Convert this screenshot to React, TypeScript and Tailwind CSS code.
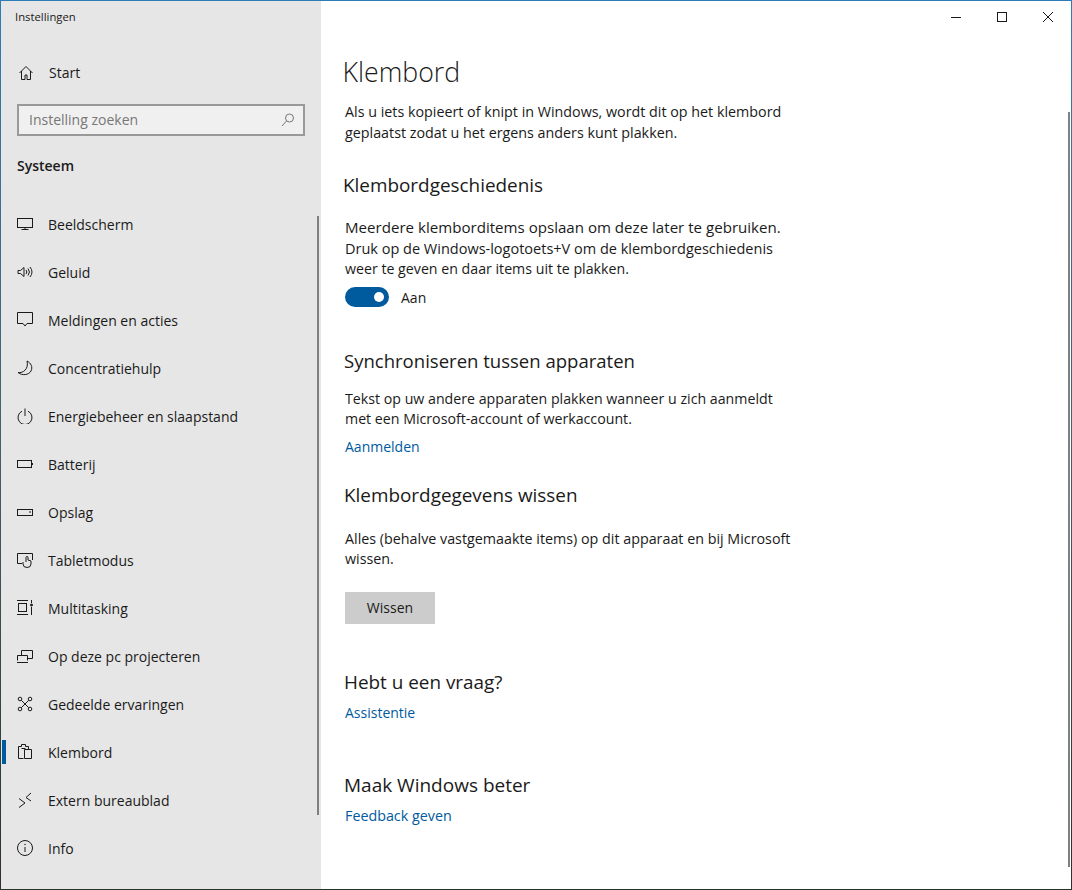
import React from 'react';

const Svg = ({ children }: { children: React.ReactNode }) => (
  <svg viewBox="0 0 16 16" className="h-4 w-4 shrink-0" fill="none" stroke="currentColor" strokeWidth="1">
    {children}
  </svg>
);

const icons: Record<string, React.ReactNode> = {
  home: <path d="M2.5 8 9 1.5 15.5 8M4.5 6v8.5H8V10h2v4.5h3.5V6" />,
  search: <><circle cx="9.5" cy="6" r="4" /><path d="M6.5 9 2 14" /></>,
  screen: <><rect x="0.5" y="2.5" width="15" height="9" /><path d="M8 11.5v2.5M4.5 13.5h7" /></>,
  sound: <path d="M1 6.5h2.5L7 3.5v9L3.500 9.500H1ZM9 6a3 3 0 0 1 0 4M11 4.500a5.500 5.500 0 0 1 0 7M13 3a8 8 0 0 1 0 10" />,
  message: <path d="M.5.500h15v11H10L8 14l-2-2.500H.5Z" />,
  moon: <path d="M10 1c4 2 6 6 4 10-2 4-9 5-13 1.500 5 1 11-3.500 9-11.500Z" />,
  power: <path d="M5 3.200a7 7 0 1 0 6 0M8 .5V8" />,
  battery: <><rect x="0.5" y="4.500" width="14" height="7" /><path d="M15.500 7v2" /></>,
  storage: <><rect x="0.5" y="5.500" width="15" height="6" /><path d="M12 8h2" /></>,
  tablet: <path d="M5 11.500H.5v-10h15V8M9 10V5.500a1 1 0 0 1 2 0V8l3 1v3a4 3.500 0 0 1-8 0v-2" />,
  multitask: <><path d="M0 .5h11M0 14.500h11M14.500 0v3M14.500 7v8" /><rect x="1.500" y="3.500" width="8" height="8" /><circle cx="14.500" cy="5" r="1" fill="currentColor" /></>,
  project: <path d="M4.500 7.500v-5h11v8H11M.5 12.500v-5h10v5M0 14.500h11" />,
  shared: <><circle cx="3" cy="3" r="1.800" /><circle cx="13" cy="3" r="1.800" /><circle cx="3" cy="13" r="1.800" /><circle cx="13" cy="13" r="1.800" /><path d="M4.300 4.300 11.700 11.700M11.700 4.300 4.300 11.700" /></>,
  clipboard: <path d="M6.500 14.500h-5v-12h3v-2h4v2h3v3M7.500 5.500h7v9h-7ZM4.500 4.500h4" />,
  remote: <path d="M2 6.500 8 11l-6 4.500M14 1 9 5.500 14 9" />,
  info: <><circle cx="8" cy="8" r="7.500" /><path d="M8 7v5" /><circle cx="8" cy="4.500" r=".7" fill="currentColor" stroke="none" /></>,
};

const navItems = [
  { label: 'Beeldscherm', icon: 'screen' },
  { label: 'Geluid', icon: 'sound' },
  { label: 'Meldingen en acties', icon: 'message' },
  { label: 'Concentratiehulp', icon: 'moon' },
  { label: 'Energiebeheer en slaapstand', icon: 'power' },
  { label: 'Batterij', icon: 'battery' },
  { label: 'Opslag', icon: 'storage' },
  { label: 'Tabletmodus', icon: 'tablet' },
  { label: 'Multitasking', icon: 'multitask' },
  { label: 'Op deze pc projecteren', icon: 'project' },
  { label: 'Gedeelde ervaringen', icon: 'shared' },
  { label: 'Klembord', icon: 'clipboard', active: true },
  { label: 'Extern bureaublad', icon: 'remote' },
  { label: 'Info', icon: 'info' },
];

const Heading = ({ className, children }: { className: string; children: React.ReactNode }) => (
  <h2 className={`leading-6 ${className}`}>{children}</h2>
);

export default function App() {
  return (
    <div className="h-[890px] w-[1072px] bg-linear-to-b from-[#2f7cb5] via-[#44606c] to-[#2a3328] p-px font-['Open_Sans',sans-serif] text-sm text-[#1a1a1a]">
      <div className="relative flex h-full">
        <aside className="relative w-[320px] shrink-0 bg-[#e6e6e6]">
          <div className="flex h-8 items-center px-3.5 text-[11.3px]">Instellingen</div>
          <div className="mt-4 flex h-12 items-center gap-4 px-4">
            {<Svg>{icons.home}</Svg>}
            Start
          </div>
          <div className="mx-4 mt-[7px] flex h-8 items-center justify-between border-2 border-[#999] bg-[#f0f0f0] pr-[7px] pl-2.5 text-[#777]">
            Instelling zoeken
            <Svg>{icons.search}</Svg>
          </div>
          <div className="mt-5 flex h-5 items-center px-4 font-semibold">Systeem</div>
          <nav className="mt-6">
            {navItems.map((item) => (
              <div key={item.label} className="relative flex h-12 items-center gap-[15px] px-4">
                {item.active && <span className="absolute top-3 left-px h-6 w-[4px] bg-[#005a9e]" />}
                <Svg>{icons[item.icon]}</Svg>
                <span className="pt-0.5">{item.label}</span>
              </div>
            ))}
          </nav>
          <div className="absolute top-[215px] right-[2px] h-[599px] w-[2px] bg-[#808080]" />
        </aside>

        <main className="relative flex-1 bg-white">
          <div className="flex h-8 items-center justify-end gap-[36px] pr-[18px]">
            <span className="h-px w-[10px] bg-[#1a1a1a]" />
            <span className="h-[10px] w-[10px] border border-[#1a1a1a]" />
            <svg viewBox="0 0 10 10" className="h-[10px] w-[10px]" stroke="#1a1a1a" strokeWidth="1">
              <path d="M0 0 10 10M10 0 0 10" />
            </svg>
          </div>
          <div className="pl-6">
            <h1 className="-ml-[2.500px] mt-[21px] text-[26.7px] leading-9 font-light">Klembord</h1>
            <p className="mt-3 w-[450px] text-[14.3px] leading-[20.5px]">
              Als u iets kopieert of knipt in Windows, wordt dit op het klembord geplaatst zodat u het ergens anders kunt plakken.
            </p>
            <Heading className="mt-[30px] -ml-[2px] text-[18.9px]">Klembordgeschiedenis</Heading>
            <p className="mt-[20px] w-[460px] text-[14.3px] leading-[20.5px]">
              <span className="text-[15.1px]">Meerdere klemborditems opslaan om deze later te gebruiken.</span>
              <br />
              <span className="text-[14.5px]">Druk op de Windows-logotoets+V om de klembordgeschiedenis</span>
              <br />
              <span className="text-[14.2px]">weer te geven en daar items uit te plakken.</span>
            </p>
            <div className="mt-[7px] flex h-5 items-center gap-3">
              <span className="flex h-5 w-11 items-center justify-end rounded-full bg-[#005a9e] pr-[5px]">
                <span className="h-[10px] w-[10px] rounded-full bg-white" />
              </span>
              <span className="pt-0.5">Aan</span>
            </div>
            <Heading className="mt-[42px] -ml-px text-[18.55px]">Synchroniseren tussen apparaten</Heading>
            <p className="mt-4 w-[450px] text-[14.2px] leading-[20.5px]">
              Tekst op uw andere apparaten plakken wanneer u zich aanmeldt met een Microsoft-account of werkaccount.
            </p>
            <a className="mt-[7px] block leading-[20.5px] text-[#005a9e]">Aanmelden</a>
            <Heading className="mt-[26px] -ml-px text-[18.9px]">Klembordgegevens wissen</Heading>
            <p className="mt-[21.5px] w-[450px] text-[14.3px] leading-[20.5px]">
              Alles (behalve vastgemaakte items) op dit apparaat en bij Microsoft wissen.
            </p>
            <button className="mt-[22.5px] block h-8 w-[90px] bg-[#cccccc]">Wissen</button>
            <Heading className="mt-[46px] -ml-px text-[18.9px]">Hebt u een vraag?</Heading>
            <a className="mt-[9px] block leading-[20.5px] text-[#005a9e]">Assistentie</a>
            <Heading className="mt-[49px] -ml-px text-[19px]">Maak Windows beter</Heading>
            <a className="mt-[9px] block text-[14.3px] leading-[20.5px] text-[#005a9e]">Feedback geven</a>
          </div>
          <div className="absolute top-[111px] right-px h-[755px] w-[2px] bg-[#808080]" />
        </main>
      </div>
    </div>
  );
}
